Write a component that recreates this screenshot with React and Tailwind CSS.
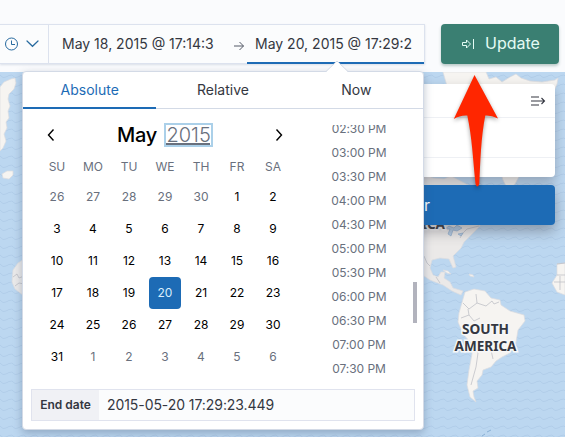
import React from "react";

const weekdays = ["SU", "MO", "TU", "WE", "TH", "FR", "SA"];
const days = [
  26, 27, 28, 29, 30, 1, 2, 3, 4, 5, 6, 7, 8, 9, 10, 11, 12, 13, 14, 15, 16, 17,
  18, 19, 20, 21, 22, 23, 24, 25, 26, 27, 28, 29, 30, 31, 1, 2, 3, 4, 5, 6,
];
const times = [
  "02:30 PM", "03:00 PM", "03:30 PM", "04:00 PM", "04:30 PM", "05:00 PM",
  "05:30 PM", "06:00 PM", "06:30 PM", "07:00 PM", "07:30 PM",
];

function WorldMap() {
  return (
    <svg className="absolute left-0 top-[72px]" width="565" height="365" viewBox="0 72 565 365">
      <defs>
        <pattern id="waves" width="12" height="9" patternUnits="userSpaceOnUse">
          <path d="M0 3 Q3 7 6 5 T12 3" fill="none" stroke="#b1cde9" strokeWidth="1" />
        </pattern>
      </defs>
      <rect y="72" width="565" height="365" fill="#bcd7f0" />
      <rect y="72" width="565" height="365" fill="url(#waves)" />
      <g fill="#f6f4f1" stroke="#dddde0" strokeWidth="0.7" strokeLinejoin="round">
        {/* western strip */}
        <path d="M0 87 L4 82 L11 79 L15 78 L16 83 L14 89 L9 94 L8 99 L10 106 L8 111 L9 118 L6 122 L7 128 L4 134 L6 141 L3 148 L0 151Z" />
        <path d="M2 174 L7 171 L13 171 L13 175 L9 179 L3 178Z" />
        <path d="M24 259 L18 263 L13 270 L12 282 L15 289 L24 296Z" fill="#ebeaea" />
        {/* Greenland and the arctic islands */}
        <path d="M443 72 L486 72 L489 79 L496 77 L502 82 L510 77 L516 74 L521 78 L530 81 L542 82 L555 80 L558 78 L557 84 L554 91 L550 103 L545 122 L540 146 L528 160 L515 184 L508 190 L503 180 L497 160 L480 120 L447 86Z" />
        {/* North and Central America */}
        <path d="M416 170 L433 178 L444 179 L451 176 L468 185 L478 205 L480 226 L475 231 L464 242 L461 248 L453 256 L456 267 L453 268 L449 259 L440 258 L432 260 L430 268 L433 275 L438 277 L441 272 L445 272 L444 278 L450 282 L453 288 L463 291 L461 295 L452 291 L443 285 L430 280 L424 276 L416 270Z" fill="#ebe9e8" />
        <path d="M443 270 l5 1 l3 3 l-4 -1Z M469 274 l4 1 l1 2 l-4 -1Z" />
        {/* South America */}
        <path d="M465 292 L474 289 L485 291 L491 298 L500 300 L501 305 L510 311 L524 315 L525 321 L518 330 L516 342 L510 353 L502 357 L496 361 L491 367 L483 370 L482 375 L477 381 L478 388 L473 391 L474 397 L476 402 L470 397 L467 385 L469 370 L472 354 L472 344 L463 334 L458 322 L459 313 L461 306Z" />
        <path d="M565 263 L557 264 L557 275 L552 283 L557 292 L565 295Z" />
      </g>
      <g fill="none" stroke="#b9bac1" strokeWidth="0.7">
        <path d="M463 303 L469 309 L477 303 L476 294 M468 309 L469 315 L461 318 M477 303 L486 306 L492 301 M469 315 L474 321 L480 318 M492 301 L494 304 L499 302 M480 341 L487 344 L491 350 L493 359 M472 347 L478 353 L476 367 L471 385" />
        <path d="M424 256 L427 263 L430 266 M460 238 L463 233 L467 229 L479 226 M436 277 L440 283 M557 264 L565 263 M557 275 L565 275 M554 282 L565 282 M560 276 V290" />
        <path d="M13 277 l4 -3 l2 4 l5 -2 M15 286 l4 -3 l5 1" />
      </g>
      <path d="M445 229 l4 -3 l5 2 l3 -3 l5 3 l-5 3 l-4 -1 l-2 6 l-3 -2 l2 -5Z M458 234 l5 -1 l-2 3Z" fill="#b4cce4" stroke="#86a6c8" strokeWidth="0.6" />
      <path d="M487 432 l4 -2 M482 436 l3 -2" stroke="#7ba4cd" strokeWidth="0.8" />
      <g fontFamily="'Noto Sans', 'Open Sans', sans-serif" fontWeight="700" fontSize="14" fill="#343741" stroke="#f7f7f7" strokeWidth="3" paintOrder="stroke" textAnchor="middle">
        <text x="485.5" y="334" textLength="47" lengthAdjust="spacingAndGlyphs">SOUTH</text>
        <text x="485.5" y="351" textLength="62" lengthAdjust="spacingAndGlyphs">AMERICA</text>
        <text x="414" y="229" textLength="62" lengthAdjust="spacingAndGlyphs">AMERICA</text>
      </g>
    </svg>
  );
}

function TopBar() {
  return (
    <header className="relative flex h-[72px] items-start bg-[#fafbfd] pt-6">
      <div className="flex h-10 w-[425px] shrink-0 border border-l-0 border-[#dce2ee] bg-[#fbfcfd] shadow-[0_1px_2px_rgba(90,110,150,0.2)]">
        <div className="flex w-12 items-center gap-[7px] pl-[5px] text-[#276a9f]">
          <svg width="14" height="14" viewBox="0 0 14 14" fill="none" stroke="currentColor" className="shrink-0">
            <circle cx="6.5" cy="7" r="6" />
            <path d="M6.5 3.5V7.5H10" />
          </svg>
          <svg width="14" height="14" viewBox="0 0 14 14" fill="none" stroke="currentColor" strokeWidth="1.2" strokeLinecap="round" className="shrink-0">
            <path d="M1 4L6.5 9.3L12 4" />
          </svg>
        </div>
        <div className="flex w-[199px] items-center border-l border-[#dce2ee] pl-[13px] text-sm text-[#343741]">
          <span className="w-[151px] whitespace-nowrap">May 18, 2015 @ 17:14:3</span>
          <svg width="12" height="12" viewBox="0 0 12 12" fill="none" stroke="#535966" className="ml-5 mt-1 shrink-0">
            <path d="M1 6H10.5M6.5 2L10.5 6L6.5 10" />
          </svg>
        </div>
        <div className="flex h-[39px] flex-1 items-center border-b-2 border-[#1d6bb5] pl-2 pt-px text-sm text-[#343741]">
          <span className="whitespace-nowrap">May 20, 2015 @ 17:29:2</span>
        </div>
      </div>
      <button className="ml-4 flex h-10 w-[118px] shrink-0 items-center rounded bg-[#3a7f72] pl-5 text-base text-[#e4fbf4] shadow-[0_2px_3px_rgba(40,90,80,0.3)]">
        <svg width="14" height="14" viewBox="0 0 14 14" fill="none" stroke="currentColor" className="shrink-0">
          <path d="M1.5 5.5H5.5V3L9.5 7L5.5 11V8.5H1.5ZM12.5 2V12" />
        </svg>
        <span className="ml-[10px] pb-[2px]">Update</span>
      </button>
    </header>
  );
}

function LayerPanel() {
  return (
    <aside className="relative ml-auto mr-[10px] mt-3 w-[240px]">
      <div className="h-[93px] rounded bg-white shadow-[0_5px_12px_rgba(70,70,80,0.35)]">
        <div className="flex h-[34px] items-center justify-end border-b border-[#eef0f4] pr-[9px]">
          <svg width="16" height="12" viewBox="0 0 16 12" fill="none" stroke="#343741" strokeWidth="1.1">
            <path d="M1 2H9M1 6H14.5M1 10H9M11.5 3L14.5 6L11.5 9" />
          </svg>
        </div>
        <div className="h-10 border-b border-[#eef0f4]" />
      </div>
      <button className="mt-2 block h-10 w-full rounded bg-[#1d6bb5] pl-[109px] text-left text-base text-white shadow-[0_6px_14px_rgba(70,70,80,0.45)]">
        r
      </button>
    </aside>
  );
}

function Calendar() {
  return (
    <section className="w-[252px]">
      <div className="flex h-[22px] items-center justify-between px-[7px] text-black">
        <svg width="10" height="14" viewBox="0 0 10 14" fill="none" stroke="currentColor" strokeWidth="1.4">
          <path d="M7.5 1.5L2.5 7L7.5 12.5" />
        </svg>
        <div className="flex items-center gap-[7px] text-xl">
          <span className="font-medium tracking-[-0.015em]">May</span>
          <span className="flex h-6 w-[49px] items-center justify-center border-2 border-[#abd0e9] font-light leading-[20px] text-[#69707d]">
            <span className="h-5 w-[44px] border-b-2 border-[#69707d] text-center leading-[21px]">2015</span>
          </span>
        </div>
        <svg width="10" height="14" viewBox="0 0 10 14" fill="none" stroke="currentColor" strokeWidth="1.4">
          <path d="M2.5 1.5L7.5 7L2.5 12.5" />
        </svg>
      </div>
      <div className="mt-[11px] grid h-[19px] grid-cols-7 items-center text-center text-xs text-[#69707d]">
        {weekdays.map((d) => <span key={d}>{d}</span>)}
      </div>
      <div className="mt-[5px] grid grid-cols-7 justify-items-center text-xs">
        {days.map((d, i) => {
          const outside = i < 5 || i > 35;
          const tone = i === 24 ? "bg-[#1d6bb5] text-[#d9edfc]" : outside ? "text-[#69707d]" : "text-black";
          return (
            <span key={i} className={"flex h-8 w-8 items-center justify-center rounded " + tone}>{d}</span>
          );
        })}
      </div>
    </section>
  );
}

function DatePopover() {
  return (
    <div className="absolute left-[22px] top-[71px] h-[359px] w-[402px] rounded border border-[#d3dae6] bg-white shadow-[0_3px_8px_rgba(60,80,110,0.35)]">
      <svg width="22" height="12" viewBox="0 0 22 12" className="absolute left-[303px] top-[-11px]">
        <path d="M0 11L11 0L22 11V12H0Z" fill="#fff" />
        <path d="M0 10.5L11 0L22 10.5" fill="none" stroke="#d3dae6" />
      </svg>
      <div className="grid h-[37px] grid-cols-3 border-b border-[#d3dae6] text-center text-sm leading-[36px] text-[#343741]">
        <span className="h-[37px] border-b-2 border-[#1d6bb5] text-[#1d6bb5]">Absolute</span>
        <span>Relative</span>
        <span>Now</span>
      </div>
      <div className="flex pl-4 pt-[15px]">
        <Calendar />
        <div className="ml-[29px] mt-[1px] flex h-[252px] flex-1 overflow-hidden">
          <ul className="mt-[-8px] w-[78px] shrink-0 text-center text-xs tracking-[-0.005em] text-[#69707d]">
            {times.map((t) => <li key={t} className="flex h-6 items-center justify-center whitespace-nowrap">{t}</li>)}
          </ul>
          <div className="ml-[15px] mt-[157px] h-[41px] w-1 bg-[#b2b3bd]" />
        </div>
      </div>
      <div className="ml-2 mt-[12px] flex h-8 w-[384px] border border-[#e0e3ee] bg-[#fbfcfd]">
        <span className="flex w-[67px] shrink-0 items-center justify-center bg-[#f0f1f5] text-xs font-semibold text-[#343741]">End date</span>
        <span className="flex items-center whitespace-nowrap pl-2 text-sm tracking-[-0.005em] text-[#343741]">2015-05-20 17:29:23.449</span>
      </div>
    </div>
  );
}

export default function App() {
  return (
    <main className="relative h-[437px] w-[565px] overflow-hidden font-['Inter',sans-serif]">
      <WorldMap />
      <TopBar />
      <LayerPanel />
      <DatePopover />
      <svg className="absolute left-[448px] top-[70px]" width="56" height="124" viewBox="448 70 56 124">
        <path d="M474.5 75L498 118.5Q491 115 485.3 115.5C481 137 480.3 162 479.3 184Q477.3 189 475.5 184C473 160 472 137 467.3 115.5Q460 115 453.8 119Z" fill="#ff2600" className="drop-shadow-[0_2px_2px_rgba(0,0,0,0.35)]" />
      </svg>
    </main>
  );
}
